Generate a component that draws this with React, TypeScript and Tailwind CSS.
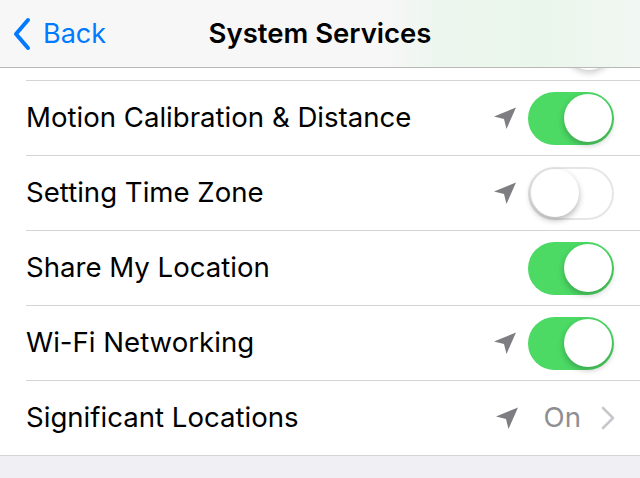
type Row = {
  label: string;
  arrow: boolean;
  toggle?: boolean;
  value?: string;
};

const rows: Row[] = [
  { label: "Motion Calibration & Distance", arrow: true, toggle: true },
  { label: "Setting Time Zone", arrow: true, toggle: false },
  { label: "Share My Location", arrow: false, toggle: true },
  { label: "Wi-Fi Networking", arrow: true, toggle: true },
  { label: "Significant Locations", arrow: true, value: "On" },
];

function LocationArrow() {
  return (
    <svg width="24" height="24" viewBox="0 0 24 24" className="shrink-0">
      <path d="M23 1.5 L1 10.5 L11 13 L13.5 23 Z" fill="#7d7d82" />
    </svg>
  );
}

function Toggle({ on }: { on: boolean }) {
  return (
    <div
      className={
        on
          ? "relative w-[86px] h-[53px] rounded-full bg-[#4cd964] shrink-0"
          : "relative w-[86px] h-[53px] rounded-full bg-white border-2 border-[#e6e6e6] shrink-0"
      }
    >
      <div
        className={
          on
            ? "absolute top-[2.5px] right-[2.5px] w-[48px] h-[48px] rounded-full bg-white shadow-[0_3px_6px_rgba(0,0,0,0.25)]"
            : "absolute top-[0.5px] left-[0.5px] w-[48px] h-[48px] rounded-full bg-white shadow-[0_3px_6px_rgba(0,0,0,0.3)]"
        }
      />
    </div>
  );
}

export default function App() {
  return (
    <div className="w-[640px] h-[478px] overflow-hidden bg-[#efeff4] flex flex-col font-['Inter','Liberation_Sans',sans-serif]">
      {/* nav bar */}
      <div className="h-[68px] shrink-0 bg-[linear-gradient(to_right,#f7f7f7_60%,#edf6ee_68%,#eaf6ec_85%,#f2f7f2_100%)] border-b border-[#b8b8b8] relative flex items-center justify-center">
        <div className="absolute left-[12px] top-0 h-full flex items-center gap-[11px] text-[#007aff]">
          <svg width="20" height="34" viewBox="0 0 20 34">
            <path d="M16 3 L4 17 L16 31" fill="none" stroke="#007aff" strokeWidth="4" strokeLinecap="round" strokeLinejoin="round" />
          </svg>
          <span className="text-[27px] leading-none">Back</span>
        </div>
        <span className="text-[27.5px] font-semibold text-black leading-none">System Services</span>
      </div>

      {/* partial row scrolled under the nav bar */}
      <div className="h-[12px] shrink-0 bg-white relative overflow-hidden">
        <div className="absolute right-[27px] -top-[46px] w-[48px] h-[48px] rounded-full bg-white shadow-[0_3px_6px_rgba(0,0,0,0.2)]" />
      </div>

      <div className="bg-white">
        {rows.map((r, i) => (
          <div key={i} className="pl-[26px]">
            <div className="h-[75px] flex items-center pr-[26px] border-t border-[#d4d4d8]">
              <span className="flex-1 text-[27.6px] text-black leading-none">{r.label}</span>
              {r.arrow && (
                <div className={r.value ? "mr-[25px]" : "mr-[11px]"}>
                  <LocationArrow />
                </div>
              )}
              {r.toggle !== undefined && <Toggle on={r.toggle} />}
              {r.value && (
                <div className="flex items-center gap-[20px]">
                  <span className="text-[27.6px] text-[#8e8e93] leading-none">{r.value}</span>
                  <svg width="14" height="24" viewBox="0 0 14 24" className="-mr-[1px]">
                    <path d="M2 2 L12 12 L2 22" fill="none" stroke="#c7c7cc" strokeWidth="2.6" strokeLinecap="round" strokeLinejoin="round" />
                  </svg>
                </div>
              )}
            </div>
          </div>
        ))}
      </div>
      <div className="border-t border-[#d4d4d8]" />
    </div>
  );
}
